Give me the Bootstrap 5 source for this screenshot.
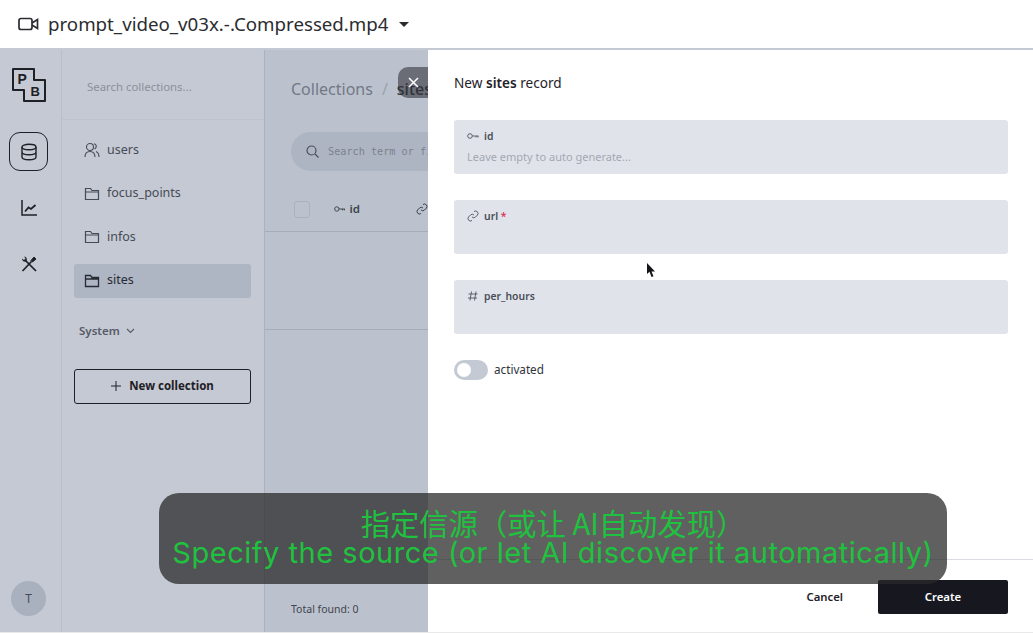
<!DOCTYPE html>
<html lang="en">
<head>
<meta charset="utf-8">
<title>New sites record</title>
<link href="https://cdn.jsdelivr.net/npm/bootstrap@5.3.0/dist/css/bootstrap.min.css" rel="stylesheet">
<style>
html,body{height:634px;overflow:hidden}
body{font-family:"Noto Sans","Open Sans",sans-serif;font-size:12px;color:#16181d;background:#fff;position:relative}
.topbar{height:50px;border-bottom:2px solid #c4cad4;background:#fff;padding-left:18px;gap:9px}
.topbar .fname{font-family:"Noto Sans",sans-serif;font-size:18.700px;color:#2a2c30}
.caret-down{width:0;height:0;border-left:5px solid transparent;border-right:5px solid transparent;border-top:5px solid #2a2c30;margin-left:1px}
.appwrap{height:583px;border-bottom:1px solid #e6e8ec}
.railbar{width:62px;background:#c5c9d3;border-right:1px solid #b9bec9;flex:none;padding-right:4px}
.logo-slot{height:34px;margin-top:18px;margin-bottom:31px}
.rail-active{width:39px;height:39px;border:1.5px solid #1e2026;border-radius:11px;margin-top:-1px}
.rail-icon{height:20px}
.rail-chart{margin-top:27px}
.rail-tools{margin-top:36px}
.avatar{width:35px;height:35px;border-radius:50%;background:#a9b1bf;color:#444a55;font-size:12px;margin-bottom:16px}
.collbar{width:203px;background:#c5c9d3;border-right:1px solid #adb3be;flex:none}
.coll-search{height:70px;border-bottom:1px solid #bdc2cc;padding:4px 0 0 25px;color:#8a909c;font-size:11.400px}
.coll-list{padding:13px 13px 0 12px}
.coll-item{height:34px;margin-bottom:9.500px;border-radius:3px;padding-left:10px;gap:7px;font-size:12.500px;color:#454b56}
.coll-item.is-on{background:#aeb5c3;color:#272b33}
.coll-sys{margin:23px 0 0 5px;font-size:11.500px;font-weight:600;color:#555b67;gap:6px;height:20px}
.coll-new{height:35px;margin-top:28px;border:1.5px solid #1e2026;border-radius:3px;font-size:11.500px;font-weight:700;color:#1e2026;gap:8px}
.mainpane{width:163px;flex:none;background:#bbc2cd;overflow:hidden;white-space:nowrap}
.crumbs{padding:27px 0 0 26px;font-size:16px;color:#727986;height:82px}
.crumbs i{font-style:normal;margin:0 9px;color:#9aa1ad;font-weight:400}
.crumbs b{font-weight:500;color:#2d3037}
.m-search{height:39px;margin-left:26px;border-radius:20px 0 0 20px;background:#aeb5c2;padding-left:15px;gap:9px;font-family:"DejaVu Sans Mono","Liberation Mono",monospace;font-size:10.200px;color:#7b818e}
.m-head{height:61px;padding:16px 0 0 29px;border-bottom:1px solid #a6adb9;font-weight:600;font-size:11.500px;color:#3d424c}
.m-check{width:17px;height:17px;border:1.500px solid #abb1bd;border-radius:3px;background:#bbc2cd}
.m-key{margin-left:24px}
.m-link{margin-left:56px}
.m-empty{height:98px;border-bottom:1px solid #a6adb9}
.m-total{position:absolute;left:291px;top:602px;font-size:10.500px;color:#3f444e}
.formpane{flex:1 1 auto;background:#fff;border-radius:0 0 10px 0}
.form-body{padding:24px 25px 0 26px}
.form-title{font-size:13.600px;color:#1f2228;margin-bottom:28px;line-height:18px}
.form-title b{font-weight:600}
.fld{height:54px;background:#e0e4ea;border-radius:3px;padding:8px 13px;margin-bottom:26px;font-size:10.400px}
.fld-label{gap:5px;font-weight:600;color:#484d58;line-height:16px;height:16px}
.fld-hint{color:#a3a8b2;font-size:11px;line-height:16px;margin-top:5px}
.req{color:#e0335a}
.toggler{width:34px;height:20px;border-radius:10px;background:#c4cad4;padding-left:3px}
.toggler span{width:14px;height:14px;border-radius:50%;background:#fff}
.toggle-row{gap:6px;font-size:11.700px;color:#2f333a}
.form-foot{height:73px;margin-top:auto;border-top:1px solid #d9dce2;padding:20px 25px 0 0;gap:35px}
.form-foot .cancel{font-size:11.300px;font-weight:600;color:#1f2228;height:34px}
.form-foot .create{width:130px;height:34px;background:#17181f;color:#fff;font-size:11.400px;font-weight:600;border-radius:2px}
.closebtn{position:absolute;left:398px;top:67px;width:30px;height:31px;border-radius:10px 0 0 10px;background:rgba(51,51,58,.6)}
.cursor-mark{position:absolute;left:646px;top:263px}
.subcap{position:absolute;left:159px;top:493px;width:788px;height:91px;border-radius:20px;background:rgba(40,40,40,.74);color:#1fc23e;text-align:center;padding-top:13px}
.subcap .zh{font-family:"Noto Sans CJK SC",sans-serif;font-size:29.300px;line-height:32px;white-space:nowrap}
.subcap .en{font-family:"Inter","Noto Sans",sans-serif;font-size:29px;line-height:29px;letter-spacing:.52px;white-space:nowrap}
.logo-txt{font-family:"Liberation Sans",sans-serif;font-weight:700;fill:#1e2026;stroke:none}
</style>
</head>
<body>
<header class="topbar d-flex align-items-center">
  <svg width="21" height="16" viewBox="0 0 21 16" fill="none" stroke="#2a2c30" stroke-width="1.700"><rect x="1" y="2.500" width="13" height="11" rx="2"/><path d="M14 7l5.500-3.500v9L14 9"/></svg>
  <span class="fname">prompt_video_v03x.-.Compressed.mp4</span>
  <span class="caret-down"></span>
</header>
<div class="appwrap d-flex">
  <nav class="railbar d-flex flex-column align-items-center">
    <div class="logo-slot">
      <svg width="34" height="34" viewBox="0 0 34 34" fill="none" stroke="#1e2026" stroke-width="2" stroke-linejoin="round"><path d="M1 1h21v11h11v21h-21v-11h-11z"/><text class="logo-txt" x="5.500" y="16" font-size="14">P</text><text class="logo-txt" x="18.500" y="28" font-size="13">B</text></svg>
    </div>
    <div class="rail-active d-flex align-items-center justify-content-center">
      <svg width="18" height="18" viewBox="0 0 18 18" fill="none" stroke="#1e2026" stroke-width="1.400"><ellipse cx="9" cy="4" rx="7" ry="2.700"/><path d="M2 4v10c0 1.500 3 2.700 7 2.700s7-1.200 7-2.700V4M2 9c0 1.500 3 2.700 7 2.700s7-1.200 7-2.700"/></svg>
    </div>
    <div class="rail-icon rail-chart">
      <svg width="18" height="18" viewBox="0 0 18 18" fill="none" stroke="#1e2026" stroke-width="1.500"><path d="M2 1v15h15"/><path d="M5 12.500l3.500-4 2.500 1.500 4.500-4" stroke-width="1.800"/></svg>
    </div>
    <div class="rail-icon rail-tools">
      <svg width="18" height="18" viewBox="0 0 18 18" fill="none" stroke="#1e2026" stroke-width="1.700"><path d="M2.500 16L11.500 6.500"/><path d="M11 5.500l3-3.500 2 2-3.500 3z" fill="#1e2026" stroke-width="1"/><path d="M16 16L6 6"/><path d="M6.500 6.500C4.500 7.500 2 6 2 3.500l2 1.500 1.500-1.500-1.500-2C6.500 1.500 7.500 4.500 6.500 6.500z" fill="#1e2026" stroke="none"/></svg>
    </div>
    <div class="avatar d-flex align-items-center justify-content-center mt-auto">T</div>
  </nav>
  <aside class="collbar d-flex flex-column">
    <div class="coll-search d-flex align-items-center">Search collections...</div>
    <div class="coll-list">
      <div class="coll-item d-flex align-items-center">
        <svg width="16" height="16" viewBox="0 0 16 16" fill="none" stroke="#454b56" stroke-width="1.100"><circle cx="6" cy="5" r="3.500"/><path d="M1 15c0-3.500 2-5.500 5-5.500s5 2 5 5.500M10 1.700c1.500.3 2.500 1.700 2.200 3.200-.2 1-.8 1.700-1.700 2.100M12 9.500c1.800.8 3 2.800 3 5.500"/></svg>
        <span>users</span>
      </div>
      <div class="coll-item d-flex align-items-center">
        <svg width="16" height="14" viewBox="0 0 16 14" fill="none" stroke="#454b56" stroke-width="1.200"><path d="M1.500 1.500h5l1.500 2h6.500v9h-13zM1.500 5h13"/></svg>
        <span>focus_points</span>
      </div>
      <div class="coll-item d-flex align-items-center">
        <svg width="16" height="14" viewBox="0 0 16 14" fill="none" stroke="#454b56" stroke-width="1.200"><path d="M1.500 1.500h5l1.500 2h6.500v9h-13zM1.500 5h13"/></svg>
        <span>infos</span>
      </div>
      <div class="coll-item is-on d-flex align-items-center">
        <svg width="16" height="14" viewBox="0 0 16 14" fill="none" stroke="#272b33" stroke-width="1.300"><path d="M1.500 1.500h5l1.500 2h6.500v9h-13zM1.500 5h13"/></svg>
        <span>sites</span>
      </div>
      <div class="coll-sys d-flex align-items-center">
        <span>System</span>
        <svg width="9" height="6" viewBox="0 0 9 6" fill="none" stroke="#555b67" stroke-width="1.100"><path d="M1 1l3.500 3.500L8 1"/></svg>
      </div>
      <div class="coll-new d-flex align-items-center justify-content-center">
        <svg width="10" height="10" viewBox="0 0 10 10" fill="none" stroke="#1e2026" stroke-width="1"><path d="M5 0v10M0 5h10"/></svg>
        <span>New collection</span>
      </div>
    </div>
  </aside>
  <main class="mainpane">
    <div class="crumbs">Collections<i>/</i><b>sites</b></div>
    <div class="m-search d-flex align-items-center">
      <svg width="13" height="13" viewBox="0 0 13 13" fill="none" stroke="#4a4f5a" stroke-width="1.200" class="flex-shrink-0"><circle cx="5.500" cy="5.500" r="4.500"/><path d="M9 9l3.500 3.500"/></svg>
      <span>Search term or filter...</span>
    </div>
    <div class="m-head d-flex align-items-center">
      <span class="m-check"></span>
      <svg class="m-key" width="12" height="6" viewBox="0 0 12 6" fill="none" stroke="#3d424c" stroke-width="1"><circle cx="3" cy="3" r="2.300"/><path d="M5.300 3H11.500M9 3v1.500M11 3v1.500"/></svg>
      <span class="ms-1">id</span>
      <svg class="m-link flex-shrink-0" width="12" height="12" viewBox="0 0 12 12" fill="none" stroke="#3d424c" stroke-width="1"><path d="M5 7a2.500 2.500 0 0 0 3.500 0l2-2A2.500 2.500 0 0 0 7 1.500M7 5a2.500 2.500 0 0 0-3.500 0l-2 2A2.500 2.500 0 0 0 5 10.500"/></svg>
    </div>
    <div class="m-empty"></div>
  </main>
  <section class="formpane d-flex flex-column">
    <div class="form-body">
      <div class="form-title">New <b>sites</b> record</div>
      <div class="fld">
        <div class="fld-label d-flex align-items-center">
          <svg width="12" height="6" viewBox="0 0 12 6" fill="none" stroke="#5b606b" stroke-width="1"><circle cx="3" cy="3" r="2.300"/><path d="M5.300 3H11.500M9 3v1.500M11 3v1.500"/></svg>
          <span>id</span>
        </div>
        <div class="fld-hint">Leave empty to auto generate...</div>
      </div>
      <div class="fld">
        <div class="fld-label d-flex align-items-center">
          <svg width="12" height="12" viewBox="0 0 12 12" fill="none" stroke="#5b606b" stroke-width="1"><path d="M5 7a2.500 2.500 0 0 0 3.500 0l2-2A2.500 2.500 0 0 0 7 1.500M7 5a2.500 2.500 0 0 0-3.500 0l-2 2A2.500 2.500 0 0 0 5 10.500"/></svg>
          <span>url <span class="req">*</span></span>
        </div>
      </div>
      <div class="fld">
        <div class="fld-label d-flex align-items-center">
          <svg width="12" height="12" viewBox="0 0 12 12" fill="none" stroke="#5b606b" stroke-width="1"><path d="M4.500 1.500L3 10.500M9 1.500L7.500 10.500M1.500 4h9M1 8h9"/></svg>
          <span>per_hours</span>
        </div>
      </div>
      <div class="toggle-row d-flex align-items-center">
        <div class="toggler d-flex align-items-center"><span></span></div>
        <span>activated</span>
      </div>
    </div>
    <footer class="form-foot d-flex justify-content-end">
      <span class="cancel d-flex align-items-center">Cancel</span>
      <span class="create d-flex align-items-center justify-content-center">Create</span>
    </footer>
  </section>
</div>
<div class="m-total">Total found: 0</div>
<div class="closebtn d-flex align-items-center justify-content-center">
  <svg width="11" height="11" viewBox="0 0 11 11" fill="none" stroke="#fff" stroke-width="1.500"><path d="M1 1l9 9M10 1l-9 9"/></svg>
</div>
<svg class="cursor-mark" width="10" height="15" viewBox="0 0 10 15"><path d="M1 0v11l2.500-2.200L5.500 14l2-.8-2-4.800H9z" fill="#15161a"/></svg>
<div class="subcap">
  <div class="zh">指定信源（或让 AI自动发现）</div>
  <div class="en">Specify the source (or let AI discover it automatically)</div>
</div>
<script src="https://cdn.jsdelivr.net/npm/bootstrap@5.3.0/dist/js/bootstrap.bundle.min.js"></script>
</body>
</html>
